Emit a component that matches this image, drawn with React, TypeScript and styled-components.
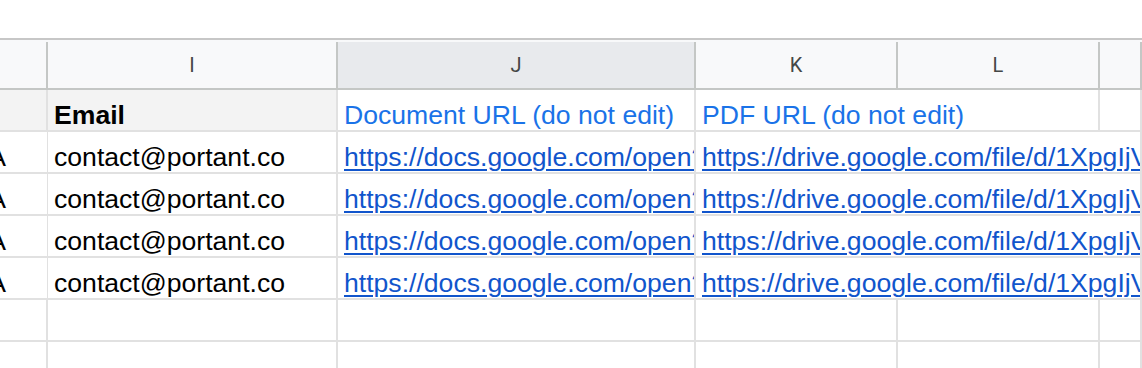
import React from 'react'
import styled, { createGlobalStyle } from 'styled-components'

const GlobalStyle = createGlobalStyle`
  html, body {
    margin: 0;
    padding: 0;
    background: #ffffff;
    overflow: hidden;
  }
`

const COLUMNS = '48px 290px 358px 202px 202px 1fr'

const Sheet = styled.div`
  width: 1142px;
  height: 368px;
  padding-top: 38px;
  box-sizing: border-box;
  overflow: hidden;
  font-family: 'Liberation Sans', Arial, sans-serif;
`

const HeaderRow = styled.div`
  display: grid;
  grid-template-columns: ${COLUMNS};
  border-top: 2px solid #c7c7c7;
  border-bottom: 2px solid #c4c7c5;
  padding-top: 2px;
  background: #f8f9fa;
`

const ColumnHeader = styled.div<{ $selected?: boolean }>`
  height: 46px;
  box-sizing: border-box;
  border-right: 2px solid #c4c7c5;
  background: ${({ $selected }) => ($selected ? '#e8eaed' : '#f8f9fa')};
  display: flex;
  align-items: center;
  justify-content: center;
  font-family: Roboto, 'Liberation Sans', sans-serif;
  font-size: 20px;
  color: #444746;
`

const Row = styled.div`
  display: grid;
  grid-template-columns: ${COLUMNS};
  height: 42px;
`

const Cell = styled.div<{ $span?: number; $fill?: string; $bold?: boolean; $color?: string; $alignEnd?: boolean }>`
  grid-column: span ${({ $span }) => $span || 1};
  box-sizing: border-box;
  border-right: 2px solid #e1e1e1;
  border-bottom: 2px solid #e1e1e1;
  background: ${({ $fill }) => $fill || '#ffffff'};
  display: flex;
  align-items: flex-end;
  justify-content: ${({ $alignEnd }) => ($alignEnd ? 'flex-end' : 'flex-start')};
  padding: 0 ${({ $alignEnd }) => ($alignEnd ? '41px' : '0')} 0 6px;
  overflow: hidden;
  white-space: nowrap;
  font-size: 26.6px;
  line-height: 30px;
  font-weight: ${({ $bold }) => ($bold ? 700 : 400)};
  color: ${({ $color }) => $color || '#000000'};
`

const Link = styled.a`
  color: #1155cc;
  text-decoration: underline;
  text-decoration-thickness: 2px;
  text-underline-offset: 3px;
`

const headerFill = '#f3f3f3'
const headerBlue = '#1a73e8'

const docUrl = 'https://docs.google.com/open?id=1XpgIjVq8sKd2mRz0bLc7nWfT'
const pdfUrl = 'https://drive.google.com/file/d/1XpgIjVq8sKd2mRz0bLc7nWfT/view'

const records = [1, 2, 3, 4]

export default function App() {
  return (
    <>
      <GlobalStyle />
      <Sheet>
        <HeaderRow>
          <ColumnHeader />
          <ColumnHeader>I</ColumnHeader>
          <ColumnHeader $selected>J</ColumnHeader>
          <ColumnHeader>K</ColumnHeader>
          <ColumnHeader>L</ColumnHeader>
          <ColumnHeader />
        </HeaderRow>

        <Row>
          <Cell $fill={headerFill} />
          <Cell $fill={headerFill} $bold>
            Email
          </Cell>
          <Cell $color={headerBlue}>Document URL (do not edit)</Cell>
          <Cell $span={2} $color={headerBlue}>
            PDF URL (do not edit)
          </Cell>
          <Cell />
        </Row>

        {records.map((n) => (
          <Row key={n}>
            <Cell $alignEnd>USA</Cell>
            <Cell>contact@portant.co</Cell>
            <Cell>
              <Link href="#">{docUrl}</Link>
            </Cell>
            <Cell $span={3}>
              <Link href="#">{pdfUrl}</Link>
            </Cell>
          </Row>
        ))}

        {[1, 2].map((n) => (
          <Row key={`empty-${n}`}>
            <Cell />
            <Cell />
            <Cell />
            <Cell />
            <Cell />
            <Cell />
          </Row>
        ))}
      </Sheet>
    </>
  )
}
